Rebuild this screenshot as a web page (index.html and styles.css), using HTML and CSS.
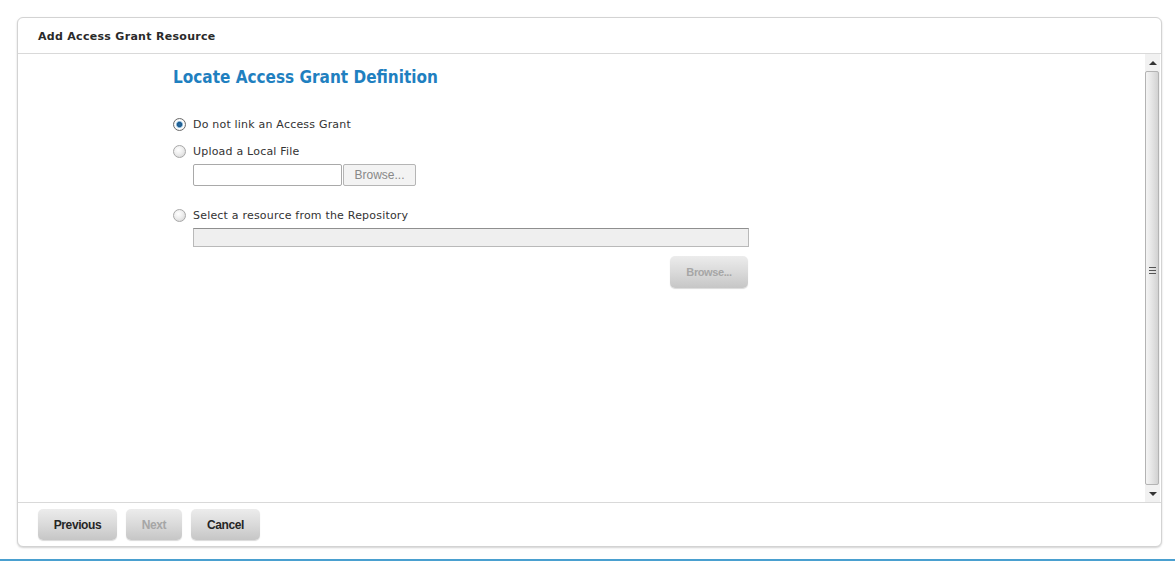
FILE: index.html
```html
<!DOCTYPE html>
<html>
<head>
<meta charset="utf-8">
<title>Add Access Grant Resource</title>
<link rel="stylesheet" href="styles.css">
</head>
<body>
<div class="page">
  <div class="dialog">
    <div class="dlg-header">Add Access Grant Resource</div>
    <div class="dlg-body">
      <div class="content">
        <h1 class="heading">Locate Access Grant Definition</h1>
        <div class="options">
          <label class="opt opt-first"><input type="radio" name="src" class="radio" checked><span>Do not link an Access Grant</span></label>
          <label class="opt opt-second"><input type="radio" name="src" class="radio"><span>Upload a Local File</span></label>
          <div class="file-row">
            <input type="text" class="file-input">
            <button class="file-btn">Browse...</button>
          </div>
          <label class="opt opt-third"><input type="radio" name="src" class="radio"><span>Select a resource from the Repository</span></label>
          <div class="repo">
            <input type="text" class="repo-input" disabled>
            <div class="repo-actions"><button class="btn btn-small" disabled>Browse...</button></div>
          </div>
        </div>
      </div>
      <div class="scrollbar">
        <div class="sb-arrow"><span class="tri-up"></span></div>
        <div class="sb-thumb"><span class="grip"></span></div>
        <div class="sb-arrow"><span class="tri-down"></span></div>
      </div>
    </div>
    <div class="dlg-footer">
      <button class="btn btn-prev">Previous</button>
      <button class="btn btn-next" disabled>Next</button>
      <button class="btn btn-cancel">Cancel</button>
    </div>
  </div>
  <div class="bottom-line"></div>
</div>
</body>
</html>
```
FILE: styles.css
```css
html, body {
  margin: 0;
  padding: 0;
  background: #ffffff;
}
.page {
  height: 561px;
  display: flex;
  flex-direction: column;
  font-family: "DejaVu Sans", sans-serif;
}
.dialog {
  margin: 17px 0 0 17px;
  width: 1145px;
  height: 530px;
  box-sizing: border-box;
  border: 1px solid #d3d3d3;
  border-radius: 6px;
  box-shadow: 0 1px 2px rgba(0,0,0,0.18);
  display: flex;
  flex-direction: column;
  background: #fff;
}
.dlg-header {
  height: 34px;
  padding-top: 1px;
  border-bottom: 1px solid #d9d9d9;
  padding-left: 20px;
  font-size: 11px;
  font-weight: bold;
  letter-spacing: 0.3px;
  color: #2a2a2a;
  line-height: 36px;
}
.dlg-body {
  height: 448px;
  display: flex;
}
.content {
  flex: 1;
  padding: 12px 0 0 155px;
}
.heading {
  margin: 0;
  font-family: "DejaVu Sans Condensed", "DejaVu Sans", sans-serif;
  font-size: 17px;
  line-height: 22px;
  font-weight: bold;
  color: #1f80c0;
}
.options {
  display: flex;
  flex-direction: column;
  font-size: 11px;
  letter-spacing: 0.2px;
  color: #333;
}
.opt {
  display: flex;
  align-items: center;
  height: 16px;
  gap: 7px;
}
.opt-first { margin-top: 28px; }
.opt-second { margin-top: 11px; }
.opt-third { margin-top: 21px; }
.radio {
  appearance: none;
  -webkit-appearance: none;
  margin: 0;
  width: 13px;
  height: 13px;
  border-radius: 50%;
  border: 1px solid #a8a8a8;
  background: radial-gradient(circle at 40% 35%, #ffffff 0, #eeeeee 45%, #cfcfcf 100%);
  box-sizing: border-box;
}
.radio:checked {
  background: radial-gradient(circle at 50% 50%, #2c6fa6 0, #1e5a8c 28%, #6fa7d0 36%, #ffffff 50%, #e2e2e2 100%);
  border-color: #6a6a6a;
}
.file-row {
  display: flex;
  margin: 5px 0 0 20px;
  gap: 1px;
  height: 22px;
}
.file-input {
  width: 149px;
  height: 22px;
  box-sizing: border-box;
  border: 1px solid #a9a9a9;
  border-radius: 2px;
  margin: 0;
  padding: 0;
  background: #fff;
}
.file-btn {
  width: 73px;
  height: 22px;
  margin: 0;
  padding: 0;
  border: 1px solid #b5b5b5;
  border-radius: 2px;
  background: #f3f3f3;
  color: #888;
  font-family: "Liberation Sans", Arial, sans-serif;
  font-size: 12px;
  letter-spacing: 0;
}
.repo {
  margin: 5px 0 0 20px;
  width: 556px;
  display: flex;
  flex-direction: column;
}
.repo-input {
  width: 556px;
  height: 19px;
  box-sizing: border-box;
  margin: 0;
  border: 1px solid #b9b9b9;
  border-top-color: #8f8f8f;
  background: #efefef;
}
.repo-actions {
  display: flex;
  justify-content: flex-end;
  margin-top: 9px;
  padding-right: 1px;
}
.btn {
  height: 32px;
  padding: 0;
  margin: 0;
  border: none;
  border-radius: 5px;
  background: linear-gradient(to bottom, #ececec 0%, #dadada 50%, #c6c6c6 100%);
  box-shadow: 0 1px 1px rgba(0,0,0,0.15);
  font-family: "Liberation Sans", Arial, sans-serif;
  font-size: 12px;
  font-weight: bold;
  letter-spacing: -0.4px;
  color: #262626;
}
.btn:disabled {
  color: #a6a6a6;
}
.btn-small {
  width: 78px;
  font-size: 11px;
  color: #9d9d9d;
}
.btn-prev { width: 79px; }
.btn-next { width: 56px; }
.btn-cancel { width: 69px; }
.scrollbar {
  width: 15px;
  margin-right: 1px;
  background: #f1f1f1;
  display: flex;
  flex-direction: column;
}
.sb-arrow {
  height: 17px;
  display: flex;
  align-items: center;
  justify-content: center;
}
.tri-up {
  width: 0; height: 0;
  border-left: 4px solid transparent;
  border-right: 4px solid transparent;
  border-bottom: 4px solid #333;
}
.tri-down {
  width: 0; height: 0;
  border-left: 4px solid transparent;
  border-right: 4px solid transparent;
  border-top: 4px solid #333;
}
.sb-thumb {
  flex: 1;
  margin: 0 1px 0 0;
  padding-bottom: 16px;
  border: 1px solid #b3b3b3;
  border-radius: 2px;
  background: linear-gradient(to right, #f4f4f4 0%, #e8e8e8 40%, #d2d2d2 100%);
  display: flex;
  align-items: center;
  justify-content: center;
}
.grip {
  width: 7px;
  height: 7px;
  background: repeating-linear-gradient(to bottom, #555 0, #555 1px, transparent 1px, transparent 3px);
}
.dlg-footer {
  flex: 1;
  border-top: 1px solid #d9d9d9;
  padding: 6px 0 0 20px;
  display: flex;
  align-items: flex-start;
  gap: 9px;
}
.dlg-footer .btn {
  height: 31px;
}
.bottom-line {
  margin-top: auto;
  height: 2px;
  background: #4aa0d0;
}
```
